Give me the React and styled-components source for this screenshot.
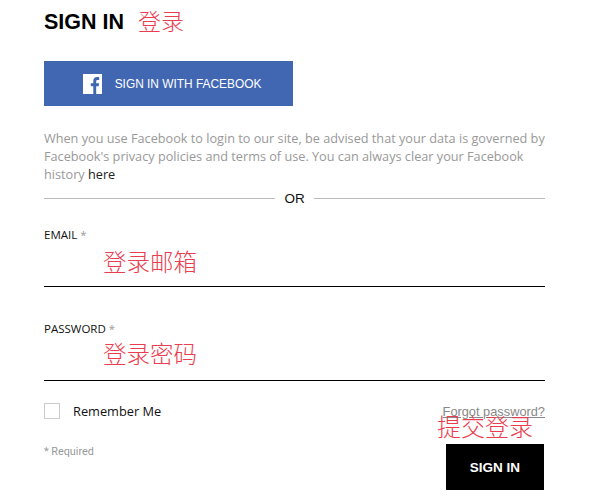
import styled, { createGlobalStyle } from 'styled-components';

const GlobalStyle = createGlobalStyle`
  body {
    margin: 0;
    background: #fff;
    font-family: "Open Sans", "Liberation Sans", sans-serif;
  }
`;

function App() {
  return (
    <Page>
      <GlobalStyle />
      <TitleRow>
        <Title>SIGN IN</Title>
        <TitleNote $size={23}>登录</TitleNote>
      </TitleRow>
      <FacebookButton>
        <svg width="19" height="20" viewBox="0 0 19 20">
          <rect width="19" height="20" fill="#fff" />
          <path
            d="M13.2 20v-7.700h2.500l.4-3h-2.900V7.400c0-.9.2-1.500 1.500-1.500h1.500V3.200c-.3 0-1.200-.1-2.200-.1-2.200 0-3.700 1.400-3.700 4v2.200H7.800v3h2.500V20z"
            fill="#4267b2"
          />
        </svg>
        SIGN IN WITH FACEBOOK
      </FacebookButton>
      <Info>
        When you use Facebook to login to our site, be advised that your data is governed by
        <br />
        Facebook's privacy policies and terms of use. You can always clear your Facebook
        <br />
        history <InfoLink>here</InfoLink>
      </Info>
      <Divider>OR</Divider>
      <Field $top={20}>
        <Label>EMAIL <Star>*</Star></Label>
        <FieldValue $pad={7}><Note $size={23.5}>登录邮箱</Note></FieldValue>
      </Field>
      <Field $top={34}>
        <Label>PASSWORD <Star>*</Star></Label>
        <FieldValue $pad={5}><Note $size={23.5}>登录密码</Note></FieldValue>
      </Field>
      <Bottom>
        <div>
          <Remember>
            <Checkbox />
            Remember Me
          </Remember>
          <Required>* Required</Required>
        </div>
        <Actions>
          <Forgot>Forgot password?</Forgot>
          <SubmitNote><Note $size={24}>提交登录</Note></SubmitNote>
          <SubmitButton>SIGN IN</SubmitButton>
        </Actions>
      </Bottom>
    </Page>
  );
}

export default App;

const Page = styled.div`
  width: 501px;
  height: 500px;
  margin-left: 44px;
  padding-top: 8px;
  box-sizing: border-box;
  overflow: hidden;
`;

const TitleRow = styled.div`
  display: flex;
  align-items: center;
  gap: 14px;
  height: 28px;
`;

const Title = styled.h1`
  margin: 0;
  font-family: "Liberation Sans", sans-serif;
  font-size: 21.500px;
  font-weight: 700;
  color: #000;
`;

const Note = styled.span`
  font-family: "Noto Sans CJK SC", sans-serif;
  font-weight: 300;
  font-size: ${(p) => p.$size}px;
  line-height: 1;
  color: #ea3d4f;
`;

const TitleNote = styled(Note)`
  margin-bottom: 4px;
`;

const FacebookButton = styled.button`
  display: flex;
  align-items: center;
  justify-content: center;
  gap: 13px;
  width: 249px;
  height: 45px;
  margin-top: 25px;
  border: none;
  padding: 0 0 0 7px;
  background: #4267b2;
  color: #fff;
  font-family: "Liberation Sans", sans-serif;
  font-size: 11.900px;
`;

const Info = styled.p`
  margin: 23px 0 0;
  font-size: 12.700px;
  line-height: 18px;
  color: #999;
  white-space: nowrap;
`;

const InfoLink = styled.span`
  color: #222;
`;

const Divider = styled.div`
  display: flex;
  align-items: center;
  gap: 9px;
  margin-top: 6px;
  height: 18px;
  font-family: "Liberation Sans", sans-serif;
  font-size: 13.500px;
  color: #111;

  &::before,
  &::after {
    content: '';
    flex: 1;
    height: 1px;
    background: #bbb;
  }
`;

const Field = styled.div`
  margin-top: ${(p) => p.$top}px;
  border-bottom: 1px solid #000;
`;

const Label = styled.div`
  font-size: 11.500px;
  line-height: 16px;
  color: #111;
`;

const Star = styled.span`
  color: #999;
`;

const FieldValue = styled.div`
  display: flex;
  align-items: flex-start;
  box-sizing: border-box;
  height: 43px;
  padding: ${(p) => p.$pad}px 0 0 59px;
`;

const Bottom = styled.div`
  display: flex;
  justify-content: space-between;
  margin-top: 21px;
`;

const Remember = styled.label`
  display: flex;
  align-items: center;
  gap: 13px;
  font-size: 12.800px;
  color: #111;
`;

const Checkbox = styled.span`
  width: 14px;
  height: 14px;
  border: 1px solid #ccc;
`;

const Required = styled.div`
  margin-top: 25px;
  font-family: "Roboto", sans-serif;
  font-size: 10.800px;
  color: #999;
`;

const Actions = styled.div`
  position: relative;
  display: flex;
  flex-direction: column;
  align-items: flex-end;
`;

const Forgot = styled.a`
  margin-top: 2px;
  font-family: "Liberation Sans", sans-serif;
  font-size: 12.800px;
  line-height: 15px;
  color: #888;
  text-decoration: underline;
`;

const SubmitNote = styled.div`
  position: absolute;
  top: 12px;
  right: 12px;
  white-space: nowrap;
`;

const SubmitButton = styled.button`
  width: 98px;
  height: 46px;
  margin-top: 25px;
  margin-right: 1px;
  border: none;
  background: #000;
  color: #fff;
  font-family: "Liberation Sans", sans-serif;
  font-size: 13.500px;
  font-weight: 700;
`;
